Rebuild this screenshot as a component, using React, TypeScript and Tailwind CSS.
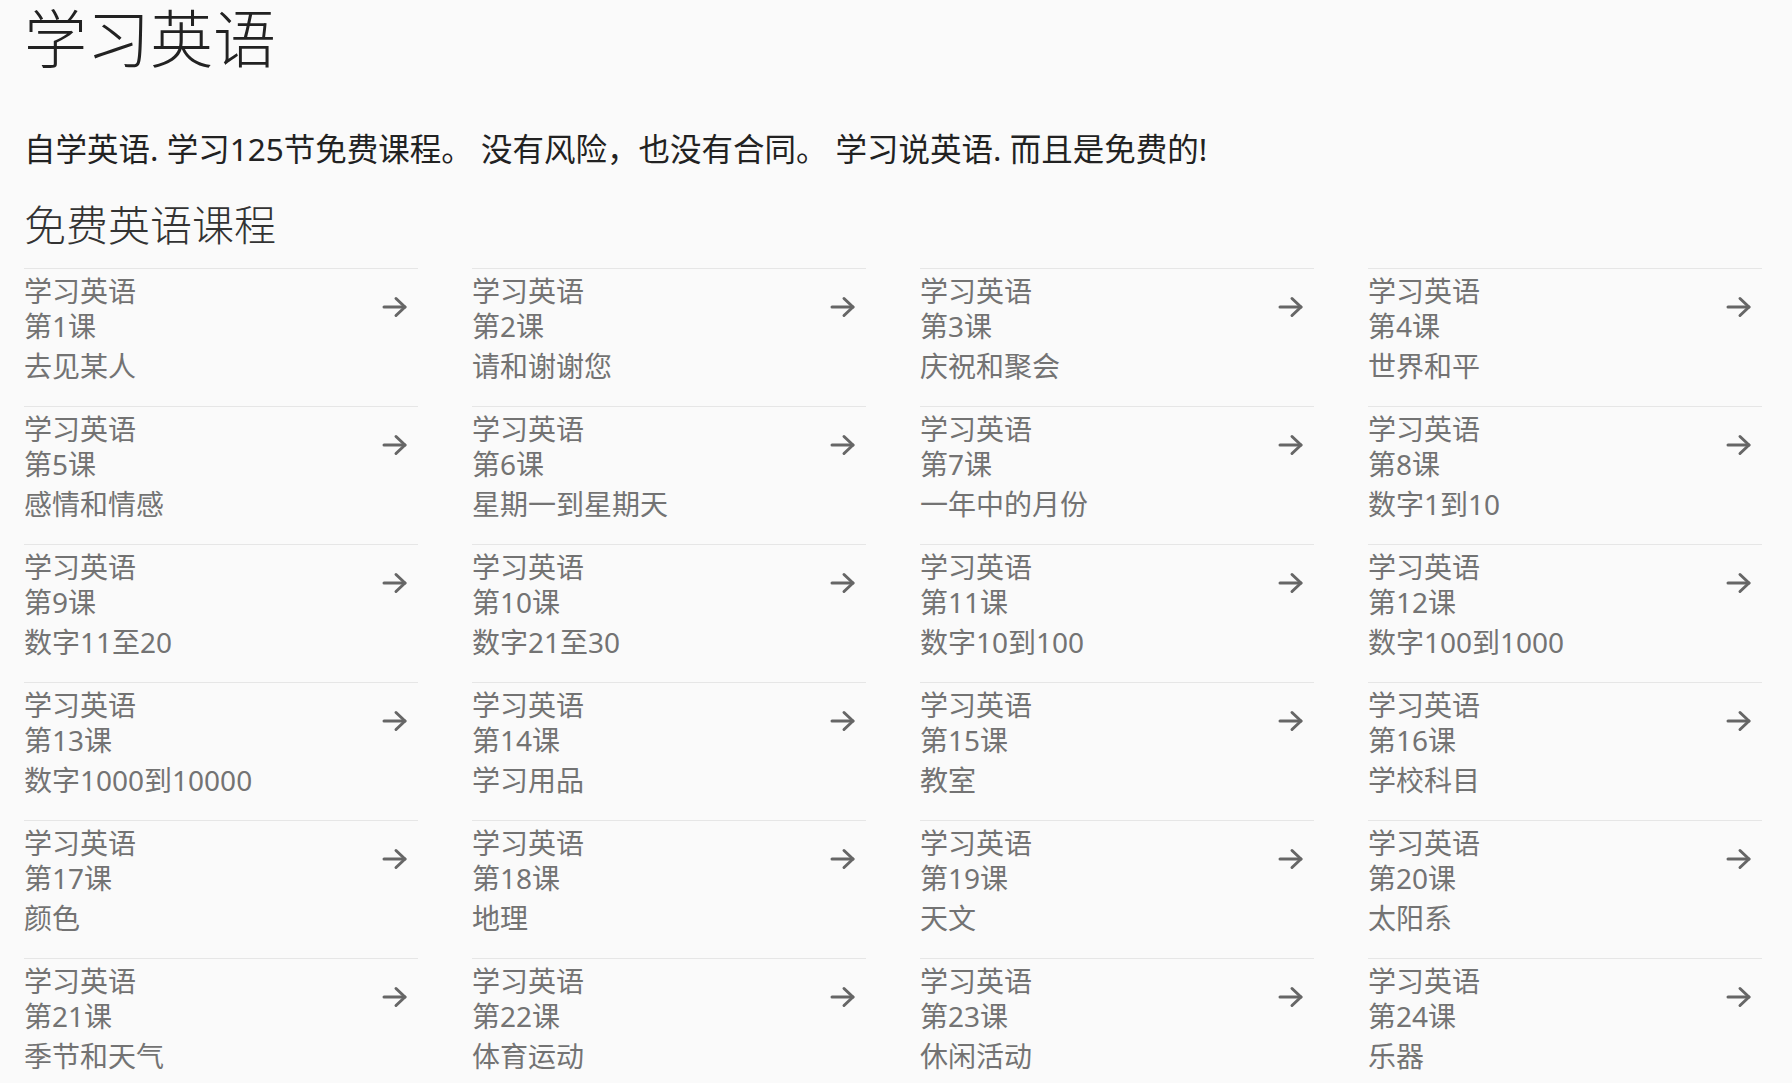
const lessons = [
  '去见某人', '请和谢谢您', '庆祝和聚会', '世界和平',
  '感情和情感', '星期一到星期天', '一年中的月份', '数字1到10',
  '数字11至20', '数字21至30', '数字10到100', '数字100到1000',
  '数字1000到10000', '学习用品', '教室', '学校科目',
  '颜色', '地理', '天文', '太阳系',
  '季节和天气', '体育运动', '休闲活动', '乐器',
]

function Arrow() {
  return (
    <svg width="26" height="22" viewBox="0 0 26 22" fill="none" stroke="#666" strokeWidth="3" strokeLinecap="round" strokeLinejoin="round">
      <path d="M2 11h21" />
      <path d="M14 2.5l9 8.5-9 8.5" />
    </svg>
  )
}

export default function App() {
  return (
    <div
      className="min-h-screen bg-[#fafafa] px-[24px] overflow-hidden"
      style={{ fontFamily: '"Noto Sans", "Noto Sans CJK SC", sans-serif' }}
    >
      <h1 className="text-[63px] leading-[76px] font-light text-[#222]">学习英语</h1>

      <p className="mt-[53px] text-[31.5px] leading-[40px] text-[#222]">
        自学英语. 学习125节免费课程。 没有风险，也没有合同。 学习说英语. 而且是免费的!
      </p>

      <h2 className="mt-[29px] text-[42px] leading-[54px] font-light text-[#333]">免费英语课程</h2>

      <div className="mt-[16px] w-[1738px] grid grid-cols-4 gap-x-[54px]">
        {lessons.map((title, i) => (
          <a
            key={i}
            href="#"
            className="flex justify-between items-start border-t border-[#e6e6e6] pt-[5px] pb-[22px] text-[#737373] text-[28px] leading-[35px]"
          >
            <div>
              <div>学习英语</div>
              <div>第{i + 1}课</div>
              <div className="mt-[5px]">{title}</div>
            </div>
            <div className="mt-[22px] mr-[10px]">
              <Arrow />
            </div>
          </a>
        ))}
      </div>
    </div>
  )
}
